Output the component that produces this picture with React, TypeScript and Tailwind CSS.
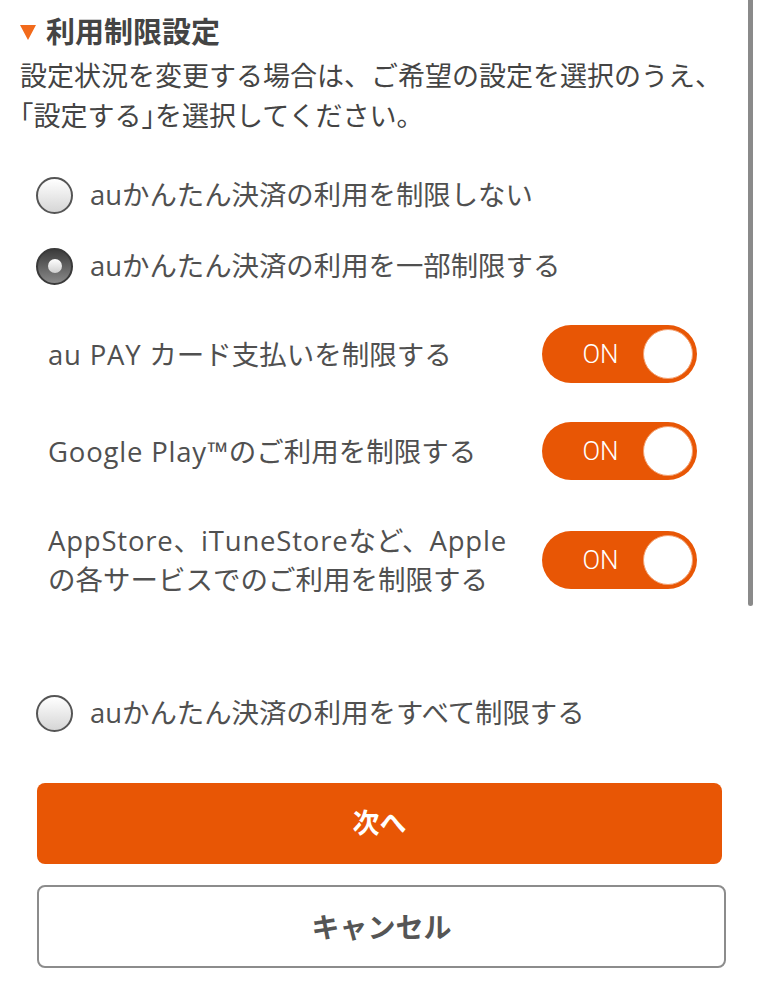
import React from 'react';

const font = { fontFamily: '"Open Sans", "Noto Sans CJK JP", sans-serif' };

// latin runs in the labels are set a little looser than the CJK text
const L: React.FC<{ children: React.ReactNode }> = ({ children }) => (
  <span className="tracking-[0.8px]">{children}</span>
);

interface RadioProps {
  checked?: boolean;
  label: string;
}

const Radio: React.FC<RadioProps> = ({ checked, label }) => (
  <div className="flex h-[50px] items-center pl-[16px]">
    {checked ? (
      <span className="flex h-[37px] w-[37px] items-center justify-center rounded-full border-[2.5px] border-[#3a3a3a] bg-gradient-to-b from-[#3c3c3c] to-[#8a8a8a]">
        <span className="h-[14px] w-[14px] rounded-full bg-gradient-to-b from-[#ffffff] to-[#cfcfcf]" />
      </span>
    ) : (
      <span className="h-[37px] w-[37px] rounded-full border-[2.5px] border-[#555] bg-gradient-to-b from-[#ffffff] to-[#d6d6d6]" />
    )}
    <span className="ml-[17px] text-[27.4px] text-[#505050]">{label}</span>
  </div>
);

const Toggle: React.FC = () => (
  <div className="flex h-[58px] w-[155px] shrink-0 items-center rounded-full bg-[#e85605] pr-[4px]">
    <span className="flex-1 pl-[16px] text-center font-['Roboto',sans-serif] text-[26px] font-light leading-none text-white">
      ON
    </span>
    <span className="h-[50px] w-[50px] rounded-full border border-[#f3a070] bg-white" />
  </div>
);

interface ToggleRowProps {
  label: React.ReactNode;
  className?: string;
}

const ToggleRow: React.FC<ToggleRowProps> = ({ label, className }) => (
  <div className={`flex items-center justify-between pl-[28px] pr-[43px] ${className ?? ''}`}>
    <div className="text-[27.5px] leading-[39px] text-[#505050]">{label}</div>
    <Toggle />
  </div>
);

export default function App() {
  return (
    <div className="relative min-h-[999px] w-[760px] overflow-hidden bg-white" style={font}>
      {/* scroll indicator */}
      <div className="absolute right-[7px] top-0 h-[606px] w-[5px] rounded-b-full bg-[#8a8a8a]" />

      <div className="px-[20px] pt-[13px]">
        {/* Heading */}
        <div className="flex h-[36px] items-center">
          <svg width="16" height="15" viewBox="0 0 16 15" className="mt-[2px]">
            <polygon points="0,0 16,0 8,15" fill="#f26a1b" />
          </svg>
          <h2 className="ml-[10px] text-[29px] font-bold leading-none text-[#444]">利用制限設定</h2>
        </div>

        <p className="mt-[7px] text-[27px] leading-[40px] text-[#444]">
          設定状況を変更する場合は、ご希望の設定を選択のうえ、
          <br />
          <span className="[font-feature-settings:'halt']">「</span>設定する
          <span className="[font-feature-settings:'halt']">」</span>を選択してください。
        </p>

        {/* Options */}
        <div className="mt-[34px]">
          <Radio label="auかんたん決済の利用を制限しない" />
          <div className="mt-[21px]">
            <Radio checked label="auかんたん決済の利用を一部制限する" />
          </div>

          <ToggleRow
            className="mt-[34px]"
            label={
              <>
                <L>au PAY </L>カード支払いを制限する
              </>
            }
          />
          <ToggleRow
            className="mt-[39px]"
            label={
              <>
                <L>Google Play™</L>のご利用を制限する
              </>
            }
          />
          <ToggleRow
            className="mt-[41px]"
            label={
              <>
                <L>AppStore</L>、<L>iTuneStore</L>など、<L>Apple</L>
                <br />
                の各サービスでのご利用を制限する
              </>
            }
          />

          <div className="mt-[89px]">
            <Radio label="auかんたん決済の利用をすべて制限する" />
          </div>
        </div>

        {/* Buttons */}
        <div className="mt-[45px] flex flex-col pl-[17px]">
          <button className="h-[81px] w-[685px] rounded-[8px] bg-[#e85605] text-[27px] font-bold text-white">
            次へ
          </button>
          <button className="mt-[21px] h-[83px] w-[689px] rounded-[8px] border-2 border-[#8c8c8c] bg-white text-[28px] font-bold text-[#555]">
            キャンセル
          </button>
        </div>
      </div>
    </div>
  );
}
